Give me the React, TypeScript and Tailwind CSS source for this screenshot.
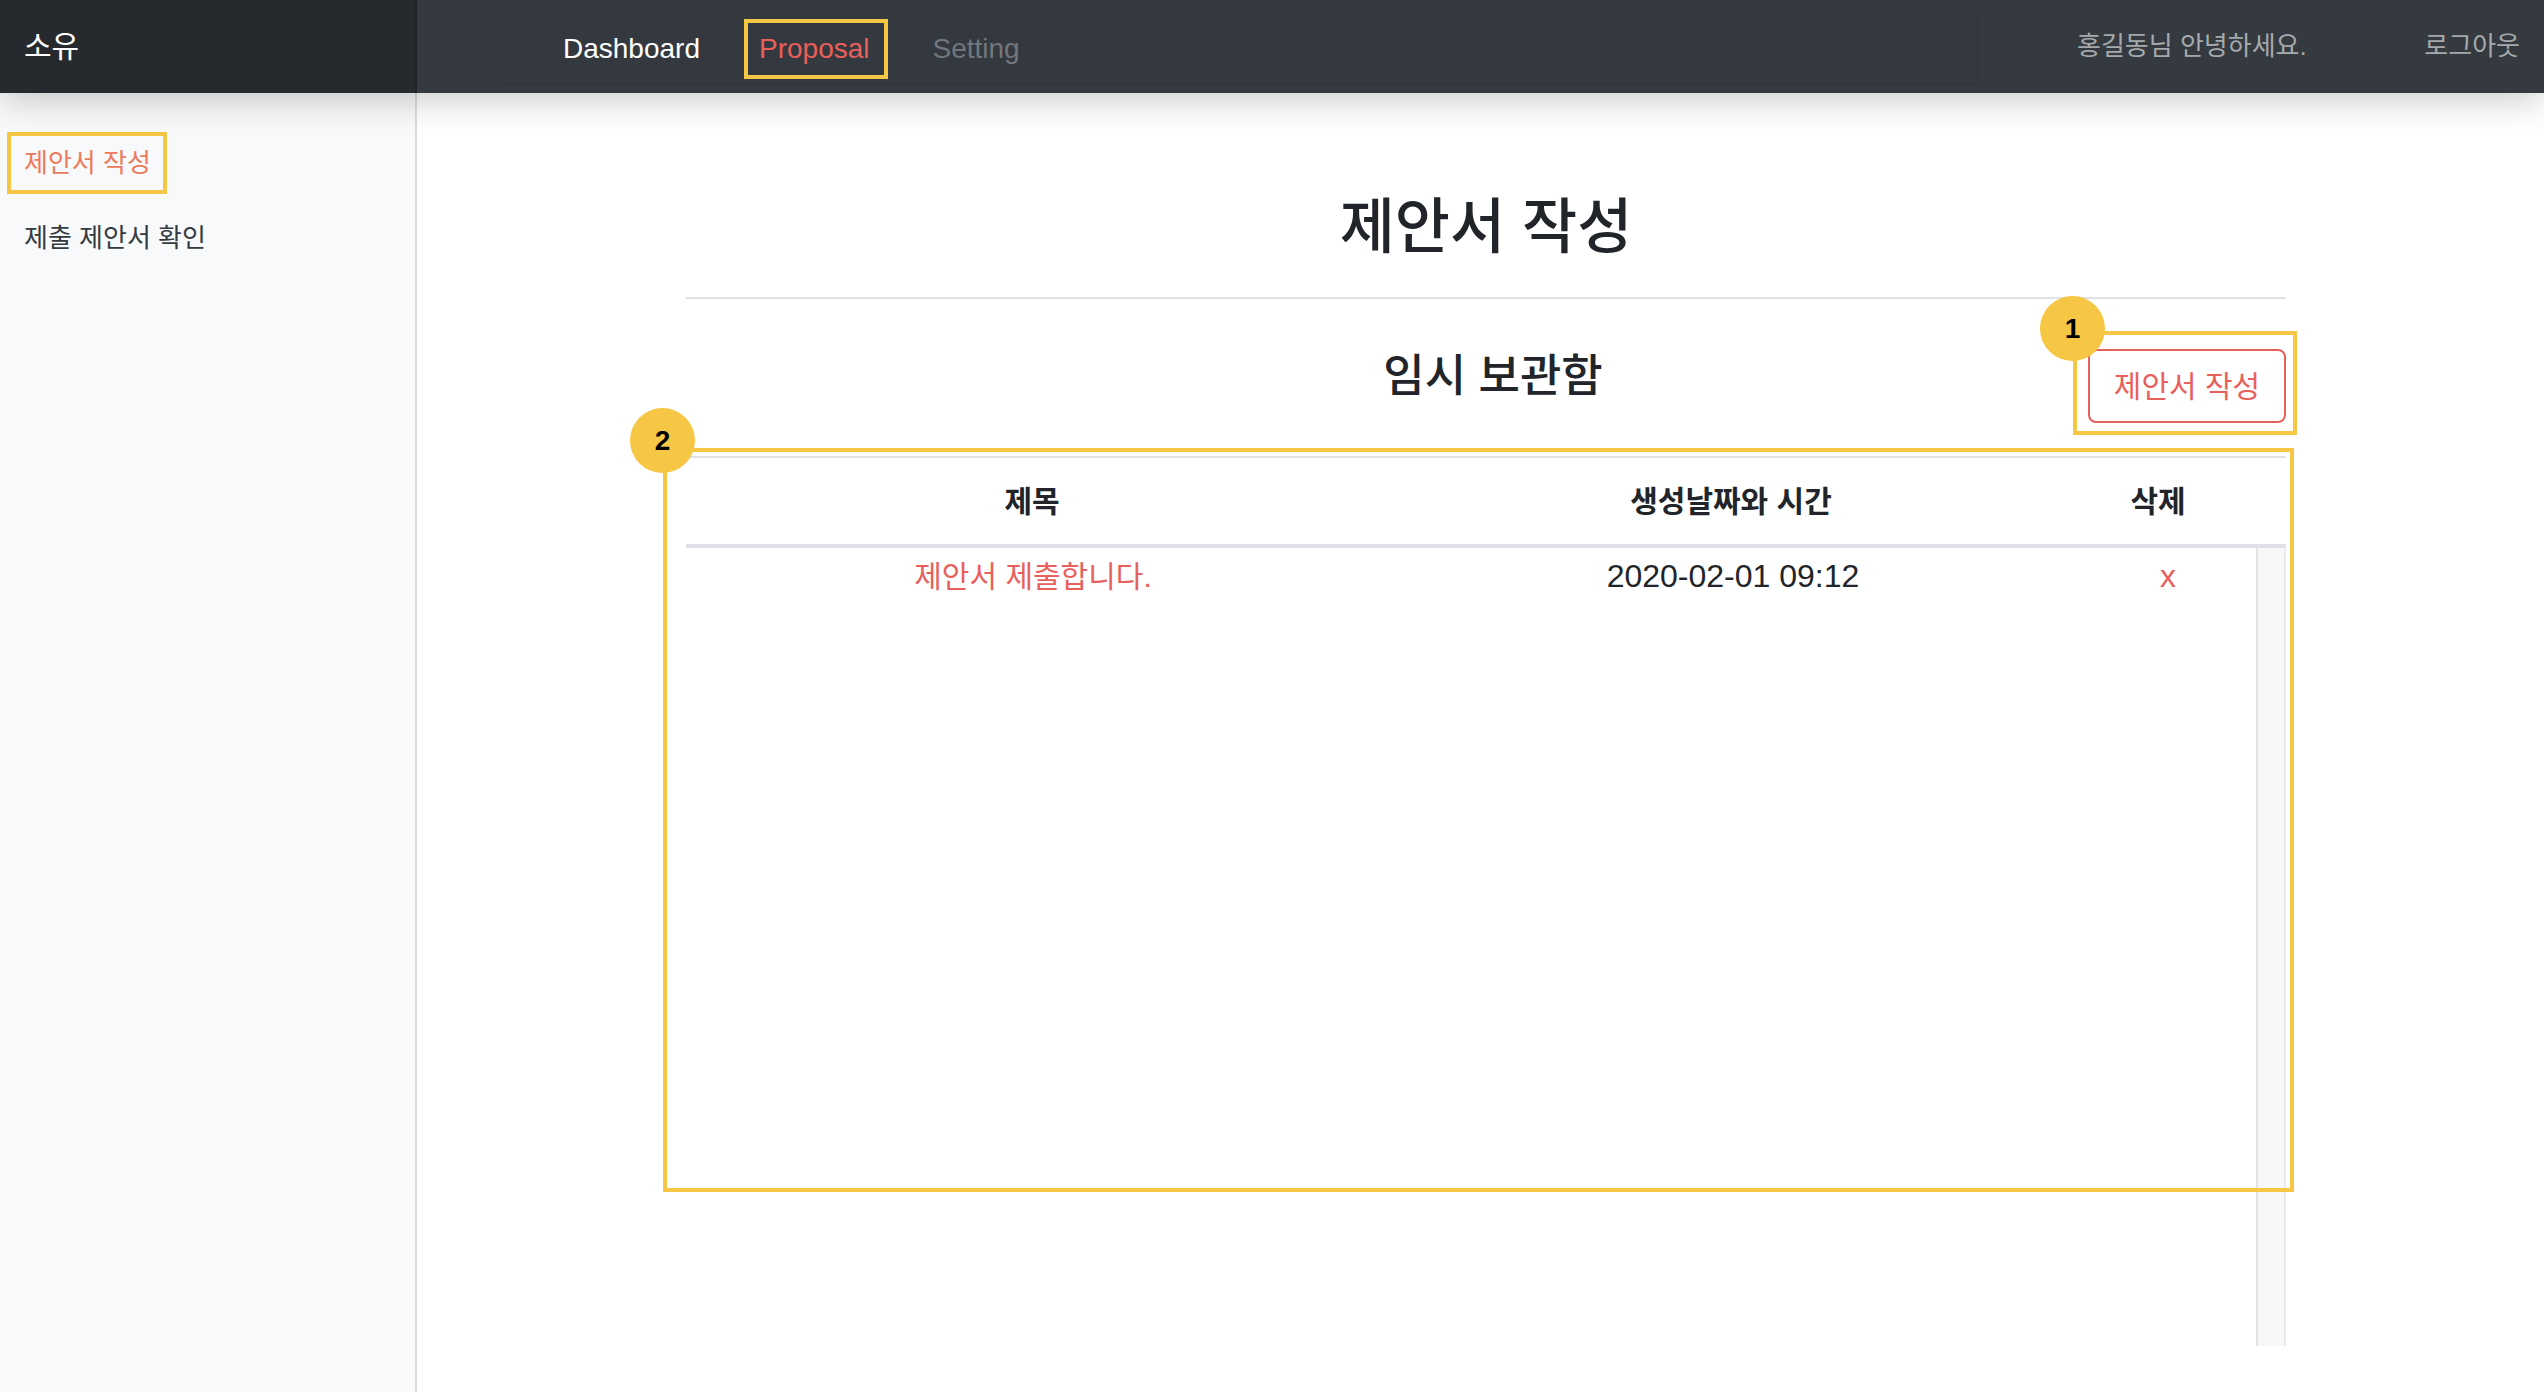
export default function App() {
  return (
    <div className="h-[1392px] w-[2544px] flex flex-col bg-white overflow-hidden font-['Liberation_Sans','Noto_Sans_CJK_KR',sans-serif]">
      <header className="relative z-10 h-[93px] flex shrink-0 shadow-[0_6px_36px_rgba(0,0,0,0.22)]">
        <div className="w-[417px] shrink-0 bg-[#26292d] flex items-center pl-[24px] text-white text-[30px] border-r-2 border-[#222428]">
          소유
        </div>
        <div className="flex-1 bg-[#343a40] flex items-center">
          <nav className="ml-[81px] mt-[4px] w-[1479px] h-[68px] flex items-center pl-[65px] bg-[#33393f] shadow-[0_1px_4px_rgba(0,0,0,0.12)]">
            <span className="text-white text-[28px]">Dashboard</span>
            <span className="ml-[44px] h-[60px] border-4 border-[#f6c744] pl-[11px] pr-[14px] flex items-center text-[#ea5f5a] text-[28px]">
              Proposal
            </span>
            <span className="ml-[45px] text-[#72777d] text-[28px]">Setting</span>
          </nav>
          <span className="ml-[100px] text-[26px] text-[#a6a9ac]">홍길동님 안녕하세요.</span>
          <span className="ml-auto mr-[24px] text-[26px] text-[#a6a9ac]">로그아웃</span>
        </div>
      </header>

      <div className="flex flex-1 min-h-0">
        <aside className="w-[417px] shrink-0 bg-[#f8f9fa] border-r-2 border-[#dcdcdc] pt-[39px]">
          <div className="ml-[7px] w-[160px] h-[62px] border-4 border-[#f6c744] pl-[13px] flex items-center text-[26px] text-[#ec7a5c]">
            제안서 작성
          </div>
          <div className="mt-[17px] pl-[24px] leading-[54px] text-[26px] text-[#343a40]">제출 제안서 확인</div>
        </aside>

        <main className="flex-1 pl-[269px] pr-[258px] pt-[97px] overflow-hidden">
          <h1 className="text-center text-[60px] font-medium leading-[76px] text-[#212529]">제안서 작성</h1>
          <div className="mt-[31px] h-[2px] bg-[#dee2e6]" />

          <div className="mt-[32px] grid grid-cols-[1fr_auto_1fr] items-start">
            <div />
            <h2 className="mt-[18px] leading-[56px] text-[45px] font-medium text-[#212529] pl-[14px]">임시 보관함</h2>
            <div className="flex justify-end -mr-[11px]">
              <div className="relative border-4 border-[#f6c744] pl-[11px] pr-[7px] pt-[14px] pb-[8px]">
                <div className="absolute -left-[37px] -top-[39px] w-[65px] h-[65px] rounded-full bg-[#f6c744] flex items-center justify-center text-[28px] font-bold text-black">
                  1
                </div>
                <button className="w-[198px] h-[74px] border-2 border-[#e8605c] rounded-[8px] text-[#e8605c] text-[30px] bg-white">
                  제안서 작성
                </button>
              </div>
            </div>
          </div>

          <div className="relative mt-[21px]">
            <div className="absolute -left-[23px] -top-[8px] w-[1631px] h-[744px] border-4 border-[#f6c744] pointer-events-none z-10">
              <div className="absolute -left-[37px] -top-[44px] w-[65px] h-[65px] rounded-full bg-[#f6c744] flex items-center justify-center text-[28px] font-bold text-black">
                2
              </div>
            </div>

            <div className="flex h-[92px] border-t-2 border-[#dee2e6] border-b-4 text-[30px] font-bold text-[#212529]">
              <div className="w-[692px] flex items-center justify-center">제목</div>
              <div className="w-[706px] flex items-center justify-center">생성날짜와 시간</div>
              <div className="flex-1 pr-[54px] flex items-center justify-center">삭제</div>
            </div>

            <div className="flex h-[798px]">
              <div className="flex-1">
                <div className="flex h-[56px] items-center">
                  <div className="w-[694px] text-center text-[30px] text-[#e8605c]">제안서 제출합니다.</div>
                  <div className="w-[706px] text-center text-[32px] text-[#212529]">2020-02-01 09:12</div>
                  <div className="flex-1 pr-[6px] text-center text-[32px] text-[#e8605c]">x</div>
                </div>
              </div>
              <div className="w-[30px] bg-[#f8f8f8] border-l-2 border-[#e3e3e3] border-r-2 border-r-[#ececec]" />
            </div>
          </div>
        </main>
      </div>
    </div>
  );
}
